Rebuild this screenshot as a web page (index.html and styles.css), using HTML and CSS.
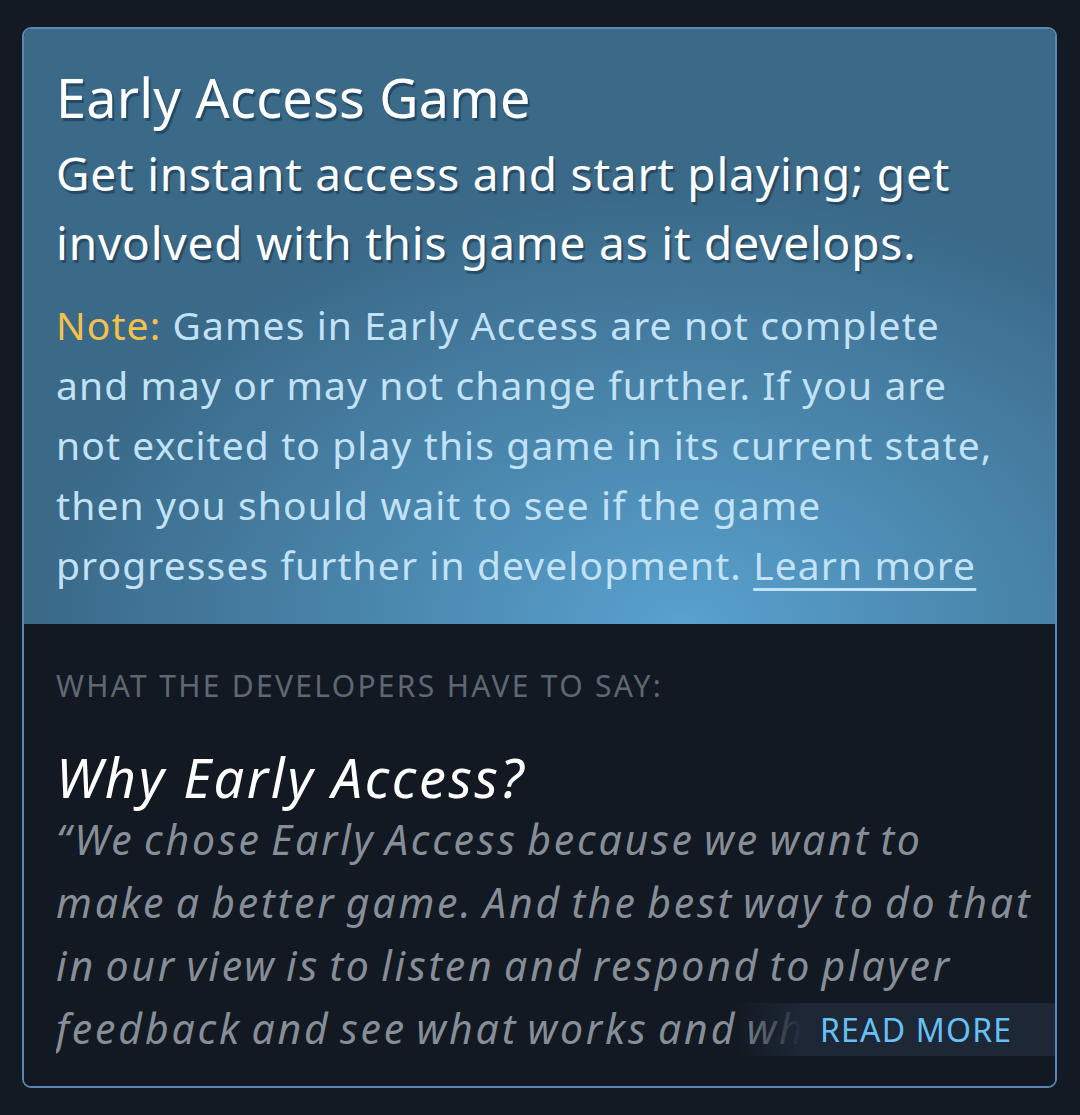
FILE: index.html
```html
<!DOCTYPE html>
<html lang="en">

<head>
    <meta charset="UTF-8">
    <meta name="viewport" content="width=device-width, initial-scale=1.0">
    <title>Early Access Game</title>
    <link rel="stylesheet" href="styles.css">
</head>

<body>

    <div class="ea-card">
        <div class="ea-top">
            <h1 class="ea-title">Early Access Game</h1>
            <p class="ea-sub">Get instant access and start playing; get involved with this game as it develops.</p>
            <p class="ea-note"><span class="note-label">Note:</span> Games in Early Access are not complete and may or may not change further. If you are not excited to play this game in its current state, then you should wait to see if the game progresses further in development. <a href="#">Learn more</a></p>
        </div>

        <div class="ea-bottom">
            <div class="dev-label">WHAT THE DEVELOPERS HAVE TO SAY:</div>
            <h2 class="dev-title">Why Early Access?</h2>
            <div class="dev-quote">
                <p>&ldquo;We chose Early Access because we want to make a better game. And the best way to do that in our view is to listen and respond to player feedback and see what works and what doesn't. We want to build this game together with the community.&rdquo;</p>
            </div>
            <div class="read-more">READ MORE</div>
        </div>
    </div>

</body>

</html>
```

FILE: styles.css
```css
:root {
    --font: "Noto Sans", "Open Sans", sans-serif;
    --page-bg: #141a23;
    --border: #5a88b2;
    --note: #f4c14a;
    --light-blue: #c2e2f8;
    --link-blue: #67c1f5;
}

* {
    margin: 0;
    padding: 0;
    box-sizing: border-box;
}

body {
    background-color: var(--page-bg);
    font-family: var(--font);
    padding: 27px 23px 0 22px;
}

.ea-card {
    border: 2px solid var(--border);
    border-radius: 9px;
    overflow: hidden;
    height: 1061px;
    display: flex;
    flex-direction: column;
}

.ea-top {
    height: 595px;
    padding: 37px 40px 0 32px;
    background:
        radial-gradient(ellipse 640px 430px at 64% 100%, rgba(90, 164, 210, 0.95), rgba(90, 164, 210, 0) 100%),
        #3b6a89;
}

.ea-title {
    font-weight: 400;
    font-size: 54px;
    line-height: 62px;
    letter-spacing: 0.2px;
    color: #fff;
    text-shadow: 2px 3px 1px rgba(22, 52, 78, 0.6);
}

.ea-sub {
    font-size: 46px;
    line-height: 69px;
    letter-spacing: 0.8px;
    color: #fff;
    margin-top: 11px;
    text-shadow: 2px 3px 1px rgba(22, 52, 78, 0.6);
}

.ea-note {
    font-size: 39px;
    line-height: 60px;
    letter-spacing: 1.1px;
    color: var(--light-blue);
    margin-top: 18px;
}

.note-label {
    color: var(--note);
}

.ea-note a {
    color: var(--light-blue);
    text-decoration: underline;
    text-underline-offset: 8px;
    text-decoration-thickness: 3px;
}

.ea-bottom {
    position: relative;
    flex: 1;
    background-color: #131922;
    padding: 42px 21px 0 32px;
}

.dev-label {
    font-size: 30px;
    line-height: 40px;
    letter-spacing: 2.3px;
    color: #5f6772;
}

.dev-title {
    font-style: italic;
    font-weight: 400;
    font-size: 54px;
    line-height: 62px;
    letter-spacing: 2.6px;
    color: #fff;
    margin-top: 40px;
}

.dev-quote {
    height: 252px;
    overflow: hidden;
}

.dev-quote p {
    font-style: italic;
    font-size: 41px;
    line-height: 63px;
    letter-spacing: 2.8px;
    word-spacing: -4px;
    color: #878e97;
}

.read-more {
    position: absolute;
    right: 0;
    bottom: 30px;
    width: 322px;
    height: 53px;
    padding-left: 87px;
    display: flex;
    align-items: center;
    font-size: 32px;
    letter-spacing: 1.2px;
    color: var(--link-blue);
    background: linear-gradient(to right, rgba(29, 39, 54, 0) 0, #1d2736 70px);
}
```
